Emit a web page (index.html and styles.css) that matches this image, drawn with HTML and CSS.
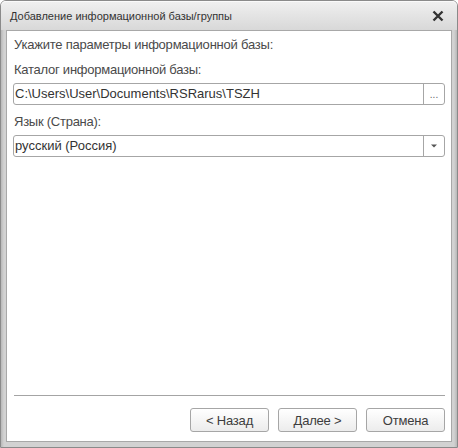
FILE: index.html
```html
<!DOCTYPE html>
<html lang="ru">
<head>
<meta charset="utf-8">
<link rel="stylesheet" href="styles.css">
</head>
<body>
<div class="window">
  <div class="titlebar">
    <span class="title">Добавление информационной базы/группы</span>
    <svg class="close" width="12" height="12" viewBox="0 0 12 12"><path d="M1.5 1.5 L10.5 10.5 M10.5 1.5 L1.5 10.5" stroke="#333" stroke-width="2.4"/></svg>
  </div>
  <div class="client">
    <div class="form">
      <div class="hint">Укажите параметры информационной базы:</div>
      <div class="label">Каталог информационной базы:</div>
      <div class="field">
        <span class="value">C:\Users\User\Documents\RSRarus\TSZH</span>
        <span class="btn-side">...</span>
      </div>
      <div class="label">Язык (Страна):</div>
      <div class="field">
        <span class="value">русский (Россия)</span>
        <span class="btn-side"><svg width="6" height="4" viewBox="0 0 6 4"><path d="M0 0.5 H6 L3 3.5 Z" fill="#555"/></svg></span>
      </div>
    </div>
    <div class="footer">
      <div class="sep"></div>
      <div class="buttons">
        <button class="btn">&lt; Назад</button>
        <button class="btn">Далее &gt;</button>
        <button class="btn">Отмена</button>
      </div>
    </div>
  </div>
</div>
</body>
</html>
```
FILE: styles.css
```css
html, body {
  margin: 0;
  padding: 0;
  background: #ffffff;
}
body {
  font-family: Arial, "Liberation Sans", sans-serif;
  color: #4a4a4a;
}
.window {
  width: 458px;
  height: 448px;
  box-sizing: border-box;
  border: 1px solid #8a8a8a;
  border-radius: 6px 6px 0 0;
  background: linear-gradient(to right, #b8b8b8, #d2d2d2 3px, #d2d2d2 calc(100% - 3px), #b8b8b8);
  display: flex;
  flex-direction: column;
  padding: 0 5px 5px 5px;
}
.titlebar {
  height: 29px;
  flex: none;
  display: flex;
  align-items: center;
  justify-content: space-between;
  margin: 0 -5px;
  padding: 0 13px 0 9px;
  background: linear-gradient(to bottom, #f0f0f0, #d8d8d8);
  border-radius: 5px 5px 0 0;
  box-shadow: inset 0 1px 0 #fafafa;
}
.title {
  font-size: 11px;
  color: #333333;
  padding-top: 1px;
}
.close {
  display: block;
  margin-top: 1px;
}
.client {
  flex: 1;
  background: #ffffff;
  border: 1px solid #a8a8a8;
  display: flex;
  flex-direction: column;
  justify-content: space-between;
  padding: 6px 6px 9px 6px;
}
.form {
  display: flex;
  flex-direction: column;
}
.hint {
  font-size: 13px;
  line-height: 16px;
  padding-left: 1px;
  margin-bottom: 9px;
  letter-spacing: -0.22px;
}
.label {
  font-size: 13px;
  line-height: 16px;
  padding-left: 1px;
  margin-bottom: 5px;
  letter-spacing: -0.25px;
}
.field {
  height: 22px;
  box-sizing: border-box;
  border: 1px solid #a6a6a6;
  border-radius: 3px;
  display: flex;
  align-items: stretch;
  margin-bottom: 9px;
}
.value {
  flex: 1;
  font-size: 13px;
  line-height: 20px;
  padding-left: 1px;
  color: #333;
}
.btn-side {
  width: 20px;
  border-left: 1px solid #a6a6a6;
  display: flex;
  align-items: center;
  justify-content: center;
  font-size: 10px;
  color: #666;
}
.btn-side svg {
  display: block;
}
.footer {
  display: flex;
  flex-direction: column;
}
.sep {
  height: 1px;
  background: #a4a4a4;
  margin: 0 0 12px 1px;
}
.buttons {
  display: flex;
  justify-content: flex-end;
  gap: 9px;
}
.btn {
  width: 79px;
  height: 24px;
  box-sizing: border-box;
  border: 1px solid #a6a6a6;
  border-radius: 3px;
  background: linear-gradient(to bottom, #ffffff, #ececec);
  font-family: Arial, "Liberation Sans", sans-serif;
  font-size: 13px;
  letter-spacing: -0.2px;
  color: #3d3d3d;
  padding: 0;
}
```
